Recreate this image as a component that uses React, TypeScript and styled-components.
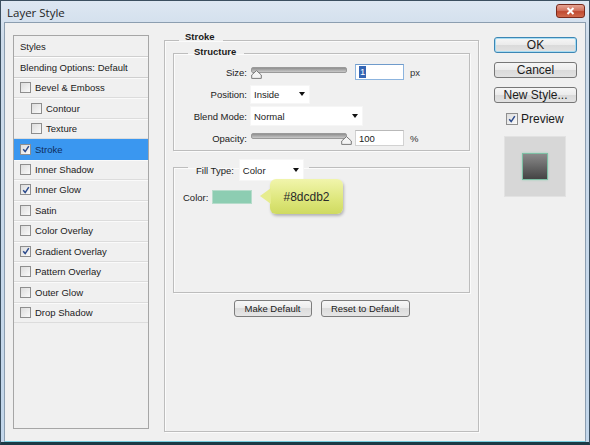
import styled, { createGlobalStyle } from "styled-components";

const GlobalStyle = createGlobalStyle`
  html, body {
    margin: 0;
    padding: 0;
    background: #1d3541;
  }
  body {
    font-family: "Liberation Sans", Arial, sans-serif;
    color: #1b1b1b;
  }
`;

const Window = styled.div`
  width: 590px;
  height: 445px;
  box-sizing: border-box;
  display: flex;
  flex-direction: column;
  background: linear-gradient(#dde7f2, #cddbea 40px, #c2d6ea);
  border: 1px solid #3b4f60;
  border-bottom: 3px solid #1b3a45;
  padding: 0 3px;
`;

const TitleBar = styled.div`
  height: 21px;
  display: flex;
  align-items: center;
  justify-content: space-between;
  padding: 0 1px 0 3px;
`;

const Title = styled.span`
  font-family: "Open Sans", "Liberation Sans", sans-serif;
  font-size: 11.5px;
  color: #1e1e1e;
  margin-top: 1px;
`;

const CloseButton = styled.div`
  width: 29px;
  height: 14px;
  box-sizing: border-box;
  border: 1px solid #7a2a1c;
  border-radius: 3px;
  background: linear-gradient(#e6a493, #d27561 45%, #c04a31 55%, #d06a4c);
  display: flex;
  align-items: center;
  justify-content: center;
  margin-top: -2px;
`;

const Client = styled.div`
  flex: 1;
  display: flex;
  align-items: flex-start;
  background: #f0f0f0;
  border: 1px solid #8c9eb0;
  border-bottom: 1px solid #78cfe0;
  padding: 12px 0 0 8px;
`;

/* ---------- left list ---------- */

const StyleList = styled.div`
  width: 136px;
  height: 394px;
  box-sizing: border-box;
  border: 1px solid #a6a6a6;
  background: #f0f0f0;
  display: flex;
  flex-direction: column;
`;

const ListHeader = styled.div`
  height: 21px;
  box-sizing: border-box;
  display: flex;
  align-items: center;
  padding-left: 6px;
  font-size: 9.5px;
  border-bottom: 1px solid #cfcfcf;
  box-shadow: 0 1px 0 #fdfdfd;
`;

const ListRow = styled.div<{ $indent?: boolean; $selected?: boolean }>`
  height: 20.45px;
  box-sizing: border-box;
  display: flex;
  align-items: center;
  gap: 4px;
  padding-left: ${(p) => (p.$indent ? "17px" : "6px")};
  font-size: 9.5px;
  background: ${(p) => (p.$selected ? "#3a97f0" : "transparent")};
  color: ${(p) => (p.$selected ? "#0f2d5c" : "#1b1b1b")};
  border-bottom: 1px solid ${(p) => (p.$selected ? "#3a97f0" : "#dcdcdc")};
  box-shadow: inset 0 1px 0 ${(p) => (p.$selected ? "#3a97f0" : "#fafafa")};
`;

const Box = styled.span<{ $size?: number }>`
  width: ${(p) => p.$size ?? 11}px;
  height: ${(p) => p.$size ?? 11}px;
  box-sizing: border-box;
  flex: none;
  border: 1px solid #8e8e8e;
  background: linear-gradient(135deg, #dcdcdc, #fafafa);
  display: flex;
  align-items: center;
  justify-content: center;
`;

const Check = ({ checked, size }: { checked?: boolean; size?: number }) => (
  <Box $size={size}>
    {checked && (
      <svg width="8" height="8" viewBox="0 0 8 8">
        <path d="M1.2 4.2 L3.2 6.6 L6.8 1.2" fill="none" stroke="#2b4a8c" strokeWidth="1.5" />
      </svg>
    )}
  </Box>
);

/* ---------- middle panel ---------- */

const GroupBox = styled.fieldset<{ $height?: number }>`
  margin: 0;
  box-sizing: border-box;
  border: 1px solid #bdbdbd;
  box-shadow: inset 1px 1px 0 #fbfbfb, 1px 1px 0 #fbfbfb;
  ${(p) => (p.$height ? `height: ${p.$height}px;` : "")}
  min-width: 0;
`;

const StrokeGroup = styled(GroupBox)`
  width: 315px;
  margin: -3px 0 0 15px;
  padding: 0 8px;
`;

const StructureGroup = styled(GroupBox)`
  margin-top: -1px;
  padding: 2px 0 1px 0;
`;

const FillGroup = styled(GroupBox)`
  margin-top: 2px;
  padding: 8px 8px 0 9px;
`;

const Legend = styled.legend<{ $offset: number; $pb: number }>`
  font-size: 9.5px;
  font-weight: bold;
  line-height: 10px;
  margin-left: ${(p) => p.$offset}px;
  padding: 0 8px ${(p) => p.$pb}px 6px;
`;

const FillLegend = styled.legend`
  display: flex;
  align-items: center;
  gap: 5px;
  margin-left: 5px;
  padding: 6px 5px 0 8px;
  font-size: 9.5px;
`;

const FormGrid = styled.div`
  display: grid;
  grid-template-columns: 73px 1fr;
  grid-auto-rows: 22px;
  column-gap: 3px;
  align-items: center;
`;

const Label = styled.span`
  font-size: 9.5px;
  text-align: right;
`;

const Controls = styled.div`
  display: flex;
  align-items: center;
`;

const Track = styled.div`
  position: relative;
  width: 94px;
  height: 4px;
  margin: -5px 0 0 1px;
  border-radius: 2px;
  background: linear-gradient(#8f8f8f, #c9c9c9);
  border: 1px solid #9a9a9a;
`;

const Thumb = styled.svg<{ $at: number }>`
  position: absolute;
  top: 2px;
  left: calc(${(p) => p.$at * 100}% - 5px);
`;

const Slider = ({ value }: { value: number }) => (
  <Track>
    <Thumb $at={value} width="11" height="9" viewBox="0 0 11 9">
      <path d="M5.5 0.6 L10.3 5 L10.3 8.4 L0.7 8.4 L0.7 5 Z" fill="#f4f4f4" stroke="#7a7a7a" />
    </Thumb>
  </Track>
);

const Field = styled.div<{ $focus?: boolean }>`
  width: 49px;
  height: 16px;
  box-sizing: border-box;
  margin-left: 8px;
  background: #fff;
  border: 1px solid ${(p) => (p.$focus ? "#8cb4de" : "#d2d2d2")};
  border-top-color: ${(p) => (p.$focus ? "#6f9bcb" : "#b9b9b9")};
  display: flex;
  align-items: center;
  padding-left: 3px;
  font-size: 9.5px;
`;

const Selected = styled.span`
  background: #3465b4;
  color: #fff;
  padding: 0 1px;
  line-height: 12px;
`;

const Unit = styled.span`
  font-size: 9.5px;
  margin-left: 6px;
  color: #333;
`;

const Dropdown = styled.div<{ $width: number; $height?: number }>`
  width: ${(p) => p.$width}px;
  height: ${(p) => p.$height ?? 20}px;
  box-sizing: border-box;
  background: #fff;
  border: 1px solid #f6f6f6;
  display: flex;
  align-items: center;
  justify-content: space-between;
  padding: 0 4px 0 3px;
  font-size: 9.5px;
  font-weight: normal;
  color: #1b1b1b;
`;

const Arrow = styled.span`
  width: 0;
  height: 0;
  border-left: 3.5px solid transparent;
  border-right: 3.5px solid transparent;
  border-top: 4px solid #111;
`;

const ColorRow = styled.div`
  position: relative;
  display: flex;
  align-items: center;
  gap: 4px;
  height: 16px;
  font-size: 9.5px;
`;

const Swatch = styled.div<{ $color: string }>`
  width: 40px;
  height: 14px;
  box-sizing: border-box;
  background: ${(p) => p.$color};
  border: 1px solid #b6dccb;
`;

const Callout = styled.div`
  position: absolute;
  left: 87px;
  top: -10px;
  width: 73px;
  height: 35px;
  border-radius: 6px;
  background: linear-gradient(#f1f5ac, #dde67a 60%, #cfda60);
  box-shadow: 1px 2px 3px rgba(0, 0, 0, 0.25);
  display: flex;
  align-items: center;
  justify-content: center;
  font-size: 12px;
  color: #2a2a2a;
  &::before {
    content: "";
    position: absolute;
    left: -10px;
    top: 9px;
    border-top: 8px solid transparent;
    border-bottom: 8px solid transparent;
    border-right: 11px solid #e6ec8e;
  }
`;

const FillBody = styled.div`
  height: 103px;
`;

const ButtonRow = styled.div`
  display: flex;
  justify-content: center;
  gap: 9px;
  margin-top: 7px;
`;

const SmallButton = styled.button<{ $width: number }>`
  width: ${(p) => p.$width}px;
  height: 17px;
  padding: 0;
  font-family: "Liberation Sans", Arial, sans-serif;
  font-size: 9.5px;
  color: #1b1b1b;
  border: 1px solid #7d7d7d;
  border-radius: 3px;
  background: linear-gradient(#f7f7f7, #ececec 50%, #dcdcdc 50%, #e6e6e6);
`;

/* ---------- right column ---------- */

const SideColumn = styled.div`
  width: 83px;
  margin: 2px 0 0 15px;
  display: flex;
  flex-direction: column;
  gap: 9px;
`;

const DialogButton = styled.button<{ $default?: boolean }>`
  height: 16px;
  padding: 0;
  font-family: "Liberation Sans", Arial, sans-serif;
  font-size: 12px;
  line-height: 14px;
  color: #1b1b1b;
  border: 1px solid ${(p) => (p.$default ? "#3c86b4" : "#777")};
  border-radius: 3px;
  box-shadow: ${(p) => (p.$default ? "inset 0 0 0 1px #a8dcf2" : "none")};
  background: linear-gradient(#f6f6f6, #ebebeb 50%, #dadada 50%, #e2e2e2);
`;

const PreviewToggle = styled.label`
  display: flex;
  align-items: center;
  gap: 3px;
  padding-left: 12px;
  font-size: 12px;
`;

const PreviewBox = styled.div`
  width: 62px;
  height: 61px;
  margin: 1px 0 0 10px;
  background: #d7d7d7;
  border: 1px solid #e2e2e2;
  box-sizing: border-box;
  display: flex;
  align-items: center;
  justify-content: center;
`;

const PreviewSquare = styled.div`
  width: 26px;
  height: 27px;
  box-sizing: border-box;
  background: linear-gradient(#8a8a8a, #444);
  border: 1px solid #7dbfa4;
  box-shadow: 0 0 2px #9bd3bc;
`;

const styleItems = [
  { name: "Bevel & Emboss" },
  { name: "Contour", indent: true },
  { name: "Texture", indent: true },
  { name: "Stroke", checked: true, selected: true },
  { name: "Inner Shadow" },
  { name: "Inner Glow", checked: true },
  { name: "Satin" },
  { name: "Color Overlay" },
  { name: "Gradient Overlay", checked: true },
  { name: "Pattern Overlay" },
  { name: "Outer Glow" },
  { name: "Drop Shadow" },
];

export default function App() {
  return (
    <>
      <GlobalStyle />
      <Window>
        <TitleBar>
          <Title>Layer Style</Title>
          <CloseButton>
            <svg width="9" height="8" viewBox="0 0 9 8">
              <path d="M1.5 1 L7.5 7 M7.5 1 L1.5 7" stroke="#fff" strokeWidth="2" />
            </svg>
          </CloseButton>
        </TitleBar>
        <Client>
          <StyleList>
            <ListHeader>Styles</ListHeader>
            <ListHeader>Blending Options: Default</ListHeader>
            {styleItems.map((item) => (
              <ListRow key={item.name} $indent={item.indent} $selected={item.selected}>
                <Check checked={item.checked} />
                {item.name}
              </ListRow>
            ))}
          </StyleList>

          <StrokeGroup $height={400}>
            <Legend $offset={6} $pb={6}>Stroke</Legend>
            <StructureGroup>
              <Legend $offset={14} $pb={2}>Structure</Legend>
              <FormGrid>
                <Label>Size:</Label>
                <Controls>
                  <Slider value={0.04} />
                  <Field $focus>
                    <Selected>1</Selected>
                  </Field>
                  <Unit>px</Unit>
                </Controls>
                <Label>Position:</Label>
                <Controls>
                  <Dropdown $width={60} $height={19}>
                    Inside <Arrow />
                  </Dropdown>
                </Controls>
                <Label>Blend Mode:</Label>
                <Controls>
                  <Dropdown $width={113}>
                    Normal <Arrow />
                  </Dropdown>
                </Controls>
                <Label>Opacity:</Label>
                <Controls>
                  <Slider value={1} />
                  <Field>100</Field>
                  <Unit>%</Unit>
                </Controls>
              </FormGrid>
            </StructureGroup>

            <FillGroup>
              <FillLegend>
                Fill Type:
                <Dropdown $width={65} $height={22}>
                  Color <Arrow />
                </Dropdown>
              </FillLegend>
              <FillBody>
                <ColorRow>
                  Color:
                  <Swatch $color="#8dcdb2" />
                  <Callout>#8dcdb2</Callout>
                </ColorRow>
              </FillBody>
            </FillGroup>

            <ButtonRow>
              <SmallButton $width={78}>Make Default</SmallButton>
              <SmallButton $width={89}>Reset to Default</SmallButton>
            </ButtonRow>
          </StrokeGroup>

          <SideColumn>
            <DialogButton $default>OK</DialogButton>
            <DialogButton>Cancel</DialogButton>
            <DialogButton>New Style...</DialogButton>
            <PreviewToggle>
              <Check checked size={12} />
              Preview
            </PreviewToggle>
            <PreviewBox>
              <PreviewSquare />
            </PreviewBox>
          </SideColumn>
        </Client>
      </Window>
    </>
  );
}
